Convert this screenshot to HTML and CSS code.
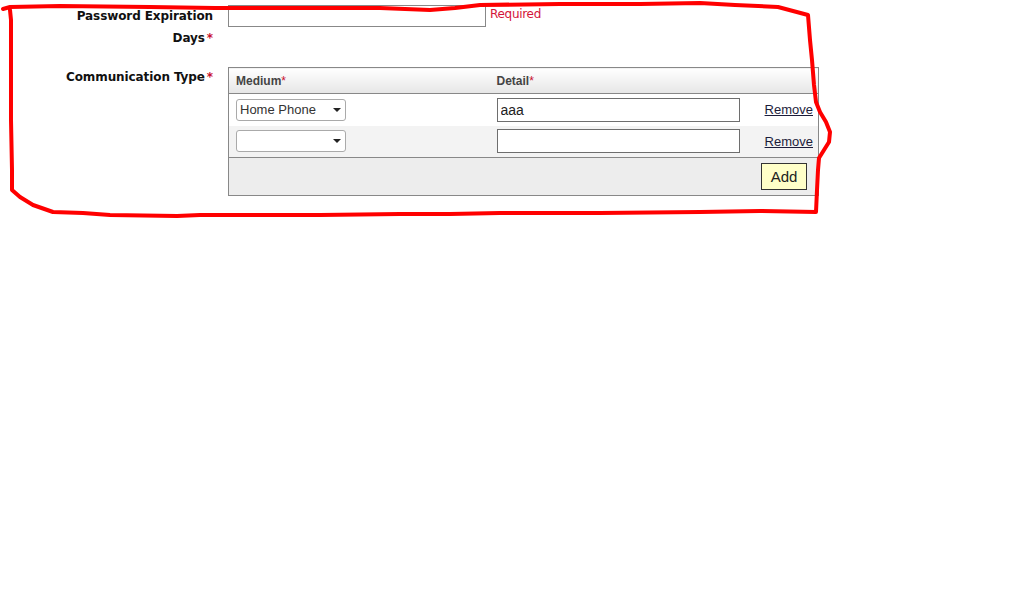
FILE: index.html
```html
<!DOCTYPE html>
<html lang="en">
<head>
  <meta charset="UTF-8">
  <title>Account Settings</title>
  <link rel="stylesheet" href="styles.css">
</head>
<body>
  <form class="settings-form">
    <div class="form-row">
      <label class="field-label req" for="pwdDays">Password Expiration Days</label>
      <div class="field">
        <input type="text" id="pwdDays" class="text-input">
        <span class="error">Required</span>
      </div>
    </div>

    <div class="form-row comm-row">
      <label class="field-label req">Communication Type</label>
      <div class="field">
        <table class="comm-table">
          <thead>
            <tr>
              <th class="col-medium req">Medium</th>
              <th class="col-detail req">Detail</th>
              <th class="col-action"></th>
            </tr>
          </thead>
          <tbody>
            <tr>
              <td class="col-medium">
                <div class="select-wrap">
                  <select class="medium-select">
                    <option>Home Phone</option>
                    <option>Work Phone</option>
                    <option>Email</option>
                  </select>
                </div>
              </td>
              <td class="col-detail"><input type="text" class="detail-input" value="aaa"></td>
              <td class="col-action"><a href="#" class="remove">Remove</a></td>
            </tr>
            <tr class="alt">
              <td class="col-medium">
                <div class="select-wrap">
                  <select class="medium-select">
                    <option></option>
                    <option>Home Phone</option>
                    <option>Work Phone</option>
                  </select>
                </div>
              </td>
              <td class="col-detail"><input type="text" class="detail-input"></td>
              <td class="col-action"><a href="#" class="remove">Remove</a></td>
            </tr>
          </tbody>
          <tfoot>
            <tr>
              <td colspan="3"><button type="button" class="add-btn">Add</button></td>
            </tr>
          </tfoot>
        </table>
      </div>
    </div>
  </form>

  <!-- hand-drawn red outline round the form -->
  <svg class="scribble" width="1024" height="615" viewBox="0 0 1024 615">
    <path d="M3 9 L10 7 L60 6 L150 7 L215 8 L300 8 L380 8 L430 10 L455 8 L480 5 L560 4 L640 4 L700 3 L735 5 L778 7 L808 15 L810 40 L812 60 L814 85 L816 102 L820 112 L826 122 L830 132 L829 142 L824 150 L819 158 L818 170 L817 190 L816 212 L760 211 L700 212 L600 213 L500 213 L450 214 L400 214 L320 215 L200 215 L177 216 L110 215 L83 213 L53 212 L33 205 L20 197 L12 190 L12 170 L11 120 L11 60 L11 20 L10 10"
          fill="none" stroke="#f00" stroke-width="4" stroke-linejoin="round" stroke-linecap="round"/>
  </svg>
</body>
</html>
```

FILE: styles.css
```css
body {
  margin: 0;
  background: #fff;
  font-family: 'Liberation Sans', Arial, sans-serif;
  color: #222;
}

.settings-form {
  padding-top: 5px;
}

.form-row {
  display: grid;
  grid-template-columns: 213px 591px;
  column-gap: 15px;
  margin-bottom: 16px;
}

.field-label {
  justify-self: end;
  width: 156px;
  text-align: right;
  font-family: 'DejaVu Sans', Verdana, sans-serif;
  font-weight: bold;
  font-size: 12px;
  letter-spacing: -0.1px;
  line-height: 22px;
  color: #111;
}

.comm-row .field-label {
  padding-top: 1px;
}

/* required marker */
.req::after {
  content: '*';
  color: #c8102e;
  padding-left: 2px;
  font-weight: bold;
}

.field {
  display: flex;
  align-items: flex-start;
}

.text-input {
  width: 258px;
  height: 22px;
  box-sizing: border-box;
  border: 1px solid #888;
  margin: 0;
  padding: 2px 4px;
}

.error {
  margin-left: 4px;
  font-family: 'DejaVu Sans', Verdana, sans-serif;
  font-size: 12px;
  letter-spacing: -0.3px;
  color: #d4143a;
  line-height: 18px;
}

.comm-row .field {
  padding-top: 2px;
}

/* communication table */
.comm-table {
  width: 591px;
  table-layout: fixed;
  border-collapse: collapse;
  border: 1px solid #888;
  font-size: 13px;
}

.comm-table th,
.comm-table td {
  box-sizing: border-box;
  padding: 0 8px;
}

.comm-table th {
  height: 26px;
  text-align: left;
  font-size: 12px;
  font-weight: bold;
  color: #444;
  background: linear-gradient(#fff, #e6e6e6);
  border-bottom: 1px solid #888;
}

.comm-table th.req::after {
  padding-left: 0;
  font-weight: normal;
}

.comm-table td {
  height: 32px;
}

.comm-table .col-medium {
  width: 260px;
  padding-left: 7px;
}

.comm-table .col-detail {
  width: 266px;
}

.comm-table .col-action {
  text-align: right;
  padding-right: 5px;
}

.comm-table tr.alt td {
  background: #f3f3f3;
}

.select-wrap {
  position: relative;
  width: 110px;
}

.select-wrap::after {
  content: '';
  position: absolute;
  right: 5px;
  top: 9px;
  border-left: 4px solid transparent;
  border-right: 4px solid transparent;
  border-top: 4px solid #222;
  pointer-events: none;
}

.medium-select {
  appearance: none;
  -webkit-appearance: none;
  width: 110px;
  height: 22px;
  margin: 0;
  padding: 0 3px;
  border: 1px solid #aaa;
  border-radius: 3px;
  background: #fff;
  font-family: 'Liberation Sans', Arial, sans-serif;
  font-size: 13px;
  color: #333;
}

.detail-input {
  display: block;
  width: 243px;
  height: 24px;
  box-sizing: border-box;
  margin: 0;
  padding: 1px 3px;
  border: 1px solid #6e6e6e;
  font-family: 'Liberation Sans', Arial, sans-serif;
  font-size: 14px;
  color: #222;
}

.remove {
  color: #1c1c3a;
  text-decoration: underline;
  font-size: 13px;
}

.comm-table tfoot td {
  height: 38px;
  padding: 0 11px 0 0;
  text-align: right;
  background: #ededed;
  border-top: 1px solid #888;
}

.add-btn {
  width: 46px;
  height: 27px;
  margin: 0;
  padding: 0;
  background: #ffffc8;
  border: 1px solid #333;
  font-family: 'Liberation Sans', Arial, sans-serif;
  font-size: 15px;
  color: #222;
  vertical-align: middle;
}

.scribble {
  position: absolute;
  top: 0;
  left: 0;
  pointer-events: none;
}
```
